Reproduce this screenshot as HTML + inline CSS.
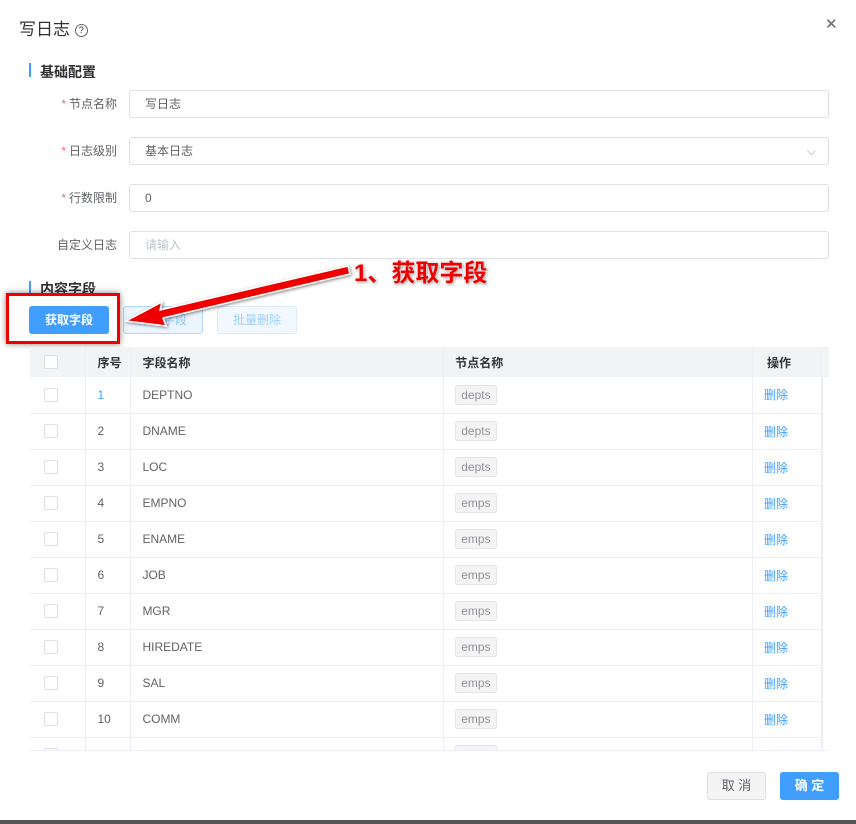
<!DOCTYPE html><html><head><meta charset="utf-8"><style>
*{box-sizing:border-box;margin:0;padding:0}
body{width:856px;height:824px;background:#fff;font-family:"Liberation Sans","Noto Sans CJK SC",sans-serif;position:relative;overflow:hidden;color:#333}
.a{position:absolute}
.lbl{position:absolute;font-size:12px;color:#606266;text-align:right;width:100px;left:17px}
.lbl i{color:#f56c6c;font-style:normal;margin-right:3px}
.inp{position:absolute;left:129px;width:700px;height:28px;border:1px solid #dcdfe6;border-radius:3px;font-size:12px;padding-left:15px;line-height:26px;color:#606266}
table{position:absolute;left:0;top:0;border-collapse:collapse;font-size:12px}
td{height:36px;border-bottom:1px solid #ebeef5;border-right:1px solid #ebeef5;color:#606266;padding-left:11px}
th{height:30px;background:#f2f3f5;text-align:left;padding-left:11px;font-weight:bold;color:#333;border-right:1px solid #ebeef5}
.cb{display:inline-block;width:14px;height:14px;border:1px solid #dcdfe6;border-radius:2px;background:#fff;vertical-align:middle}
.tag{display:inline-block;border:1px solid #e4e4e4;background:#f4f4f5;color:#909399;border-radius:3px;padding:0 5px;line-height:18px;font-size:12px}
.del{color:#409eff}
</style></head><body>
<div class="a" style="left:19px;top:15px;font-size:17px;color:#303133">写日志 <span style="display:inline-block;width:13px;height:13px;border:1px solid #666;border-radius:50%;font-size:9px;text-align:center;line-height:11px;vertical-align:2px">?</span></div>
<div class="a" style="left:825px;top:15px;font-size:15px;color:#666">✕</div>
<div class="a" style="left:29px;top:63px;width:2px;height:14px;background:#409eff"></div>
<div class="a" style="left:40px;top:62px;font-size:14px;font-weight:bold;color:#303133">基础配置</div>
<div class="lbl" style="top:95px"><i>*</i>节点名称</div><div class="inp" style="top:90px">写日志</div>
<div class="lbl" style="top:142px"><i>*</i>日志级别</div><div class="inp" style="top:137px">基本日志<span style="position:absolute;right:12px;top:0;color:#aaa">⌵</span></div>
<div class="lbl" style="top:189px"><i>*</i>行数限制</div><div class="inp" style="top:184px">0</div>
<div class="lbl" style="top:236px">自定义日志</div><div class="inp" style="top:231px;color:#c0c4cc">请输入</div>
<div class="a" style="left:29px;top:281px;width:2px;height:14px;background:#409eff"></div>
<div class="a" style="left:40px;top:279px;font-size:14px;font-weight:bold;color:#303133">内容字段</div>
<div class="a" style="left:29px;top:306px;width:80px;height:28px;background:#409eff;border-radius:3px;color:#fff;font-size:12px;text-align:center;line-height:28px;font-weight:bold">获取字段</div>
<div class="a" style="left:123px;top:306px;width:80px;height:28px;background:#ecf5ff;border:1px solid #b3d8ff;border-radius:3px;color:#8cc5ff;font-size:12px;text-align:center;line-height:26px">添加字段</div>
<div class="a" style="left:217px;top:306px;width:80px;height:28px;background:#f2f8ff;border:1px solid #d9ecff;border-radius:3px;color:#a0cfff;font-size:12px;text-align:center;line-height:26px">批量删除</div>
<div class="a" style="left:6px;top:293px;width:114px;height:51px;border:3px solid #e00;box-shadow:0 0 6px rgba(0,0,0,.5)"></div>
<div class="a" style="left:30px;top:347px;width:799px;height:404px;overflow:hidden;border-bottom:1px solid #ebeef5;background:linear-gradient(#f2f3f5,#f2f3f5) no-repeat 0 0/100% 30px">
<table style="width:792px">
<tr><th style="width:56px;padding-left:14px"><span class="cb"></span></th><th style="width:45px">序号</th><th style="width:313px">字段名称</th><th style="width:309px">节点名称</th><th style="width:69px;padding-left:14px">操作</th></tr>
<tr><td style="padding-left:14px;height:35px"><span class="cb"></span></td><td style="color:#409eff">1</td><td>DEPTNO</td><td><span class="tag">depts</span></td><td class="del">删除</td></tr>
<tr><td style="padding-left:14px"><span class="cb"></span></td><td>2</td><td>DNAME</td><td><span class="tag">depts</span></td><td class="del">删除</td></tr>
<tr><td style="padding-left:14px"><span class="cb"></span></td><td>3</td><td>LOC</td><td><span class="tag">depts</span></td><td class="del">删除</td></tr>
<tr><td style="padding-left:14px"><span class="cb"></span></td><td>4</td><td>EMPNO</td><td><span class="tag">emps</span></td><td class="del">删除</td></tr>
<tr><td style="padding-left:14px"><span class="cb"></span></td><td>5</td><td>ENAME</td><td><span class="tag">emps</span></td><td class="del">删除</td></tr>
<tr><td style="padding-left:14px"><span class="cb"></span></td><td>6</td><td>JOB</td><td><span class="tag">emps</span></td><td class="del">删除</td></tr>
<tr><td style="padding-left:14px"><span class="cb"></span></td><td>7</td><td>MGR</td><td><span class="tag">emps</span></td><td class="del">删除</td></tr>
<tr><td style="padding-left:14px"><span class="cb"></span></td><td>8</td><td>HIREDATE</td><td><span class="tag">emps</span></td><td class="del">删除</td></tr>
<tr><td style="padding-left:14px"><span class="cb"></span></td><td>9</td><td>SAL</td><td><span class="tag">emps</span></td><td class="del">删除</td></tr>
<tr><td style="padding-left:14px"><span class="cb"></span></td><td>10</td><td>COMM</td><td><span class="tag">emps</span></td><td class="del">删除</td></tr>
<tr><td style="padding-left:14px"><span class="cb"></span></td><td>11</td><td>DEPTNO_1</td><td><span class="tag">emps</span></td><td class="del">删除</td></tr>
</table>
<div class="a" style="left:792px;top:30px;width:7px;height:380px;border-left:1px solid #ebeef5"></div>
</div>
<svg class="a" style="left:0;top:0" width="856" height="824"><defs><filter id="s"><feDropShadow dx="1" dy="1" stdDeviation="1.5" flood-opacity=".5"/></filter></defs>
<polygon points="348,266 160,310 162,302 126,321 166,326 163,318 350,274" fill="#e00" stroke="#fff" stroke-width="1.5" filter="url(#s)"/></svg>
<div class="a" style="left:354px;top:253px;font-size:24px;font-weight:bold;color:#e00;text-shadow:0 0 2px #fff,1px 1px 3px rgba(0,0,0,.5)">1、获取字段</div>
<div class="a" style="left:707px;top:772px;width:59px;height:28px;background:#f4f4f5;border:1px solid #dcdfe6;border-radius:3px;font-size:13px;text-align:center;line-height:26px;color:#606266">取 消</div>
<div class="a" style="left:780px;top:772px;width:59px;height:28px;background:#409eff;border-radius:3px;font-size:13px;text-align:center;line-height:28px;color:#fff;font-weight:bold">确 定</div>
<div class="a" style="left:0;top:820px;width:856px;height:4px;background:#555"></div>
</body></html>
